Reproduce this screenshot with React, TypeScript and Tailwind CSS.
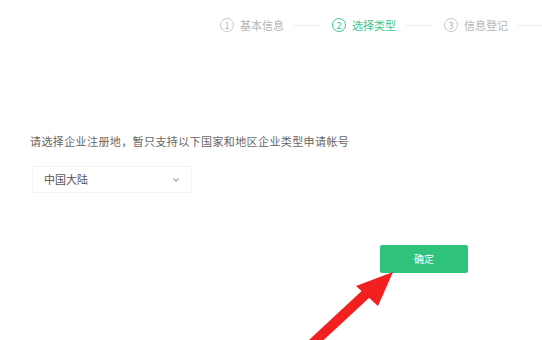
import { ChevronDown } from 'lucide-react';

const steps = [
    { n: '1', label: '基本信息', active: false },
    { n: '2', label: '选择类型', active: true },
    { n: '3', label: '信息登记', active: false },
];

export default function App() {
    return (
        <div className="relative w-[542px] h-[340px] bg-white overflow-hidden text-[11px]" style={{ fontFamily: '"Noto Sans CJK SC", "Noto Sans", sans-serif' }}>
            {/* steps */}
            <div className="flex items-center pt-[18px] pl-[220px] whitespace-nowrap">
                {steps.map((s) => (
                    <div key={s.n} className="flex items-center shrink-0">
                        <div className={`flex items-center gap-[6px] ${s.active ? 'text-[#3cc98a]' : 'text-[#b5b5b5]'}`}>
                            <span className={`w-[14px] h-[14px] rounded-full border flex items-center justify-center text-[9px] leading-none ${s.active ? 'border-[#3cc98a]' : 'border-[#c8c8c8]'}`}>{s.n}</span>
                            <span className="leading-[14px]">{s.label}</span>
                        </div>
                        <div className="w-[25px] h-px bg-[#ececec] ml-[10px] mr-[13px]"></div>
                    </div>
                ))}
            </div>

            <p className="mt-[104px] ml-[30px] text-[#666] leading-[11px] tracking-[0.4px] whitespace-nowrap">
                请选择企业注册地，暂只支持以下国家和地区企业类型申请帐号
            </p>

            <div className="mt-[19px] ml-[32px] w-[160px] h-[27px] border border-[#f3f3f3] flex items-center justify-between px-[11px]">
                <span className="text-[#555] leading-none">中国大陆</span>
                <ChevronDown size={8} strokeWidth={4} className="text-[#aaa]" />
            </div>

            <div className="flex justify-end pr-[74px] mt-[52px]">
                <button className="w-[88px] h-[28px] rounded-[2px] bg-[#2fc27a] text-white text-[10px] leading-none">确定</button>
            </div>

            <svg className="absolute left-0 top-0" width="542" height="340" viewBox="0 0 542 340">
                <line x1="312" y1="344" x2="368" y2="292" stroke="#f2201e" strokeWidth="10" />
                <polygon points="393,272 356,286 378,306" fill="#f2201e" />
            </svg>
        </div>
    );
}
